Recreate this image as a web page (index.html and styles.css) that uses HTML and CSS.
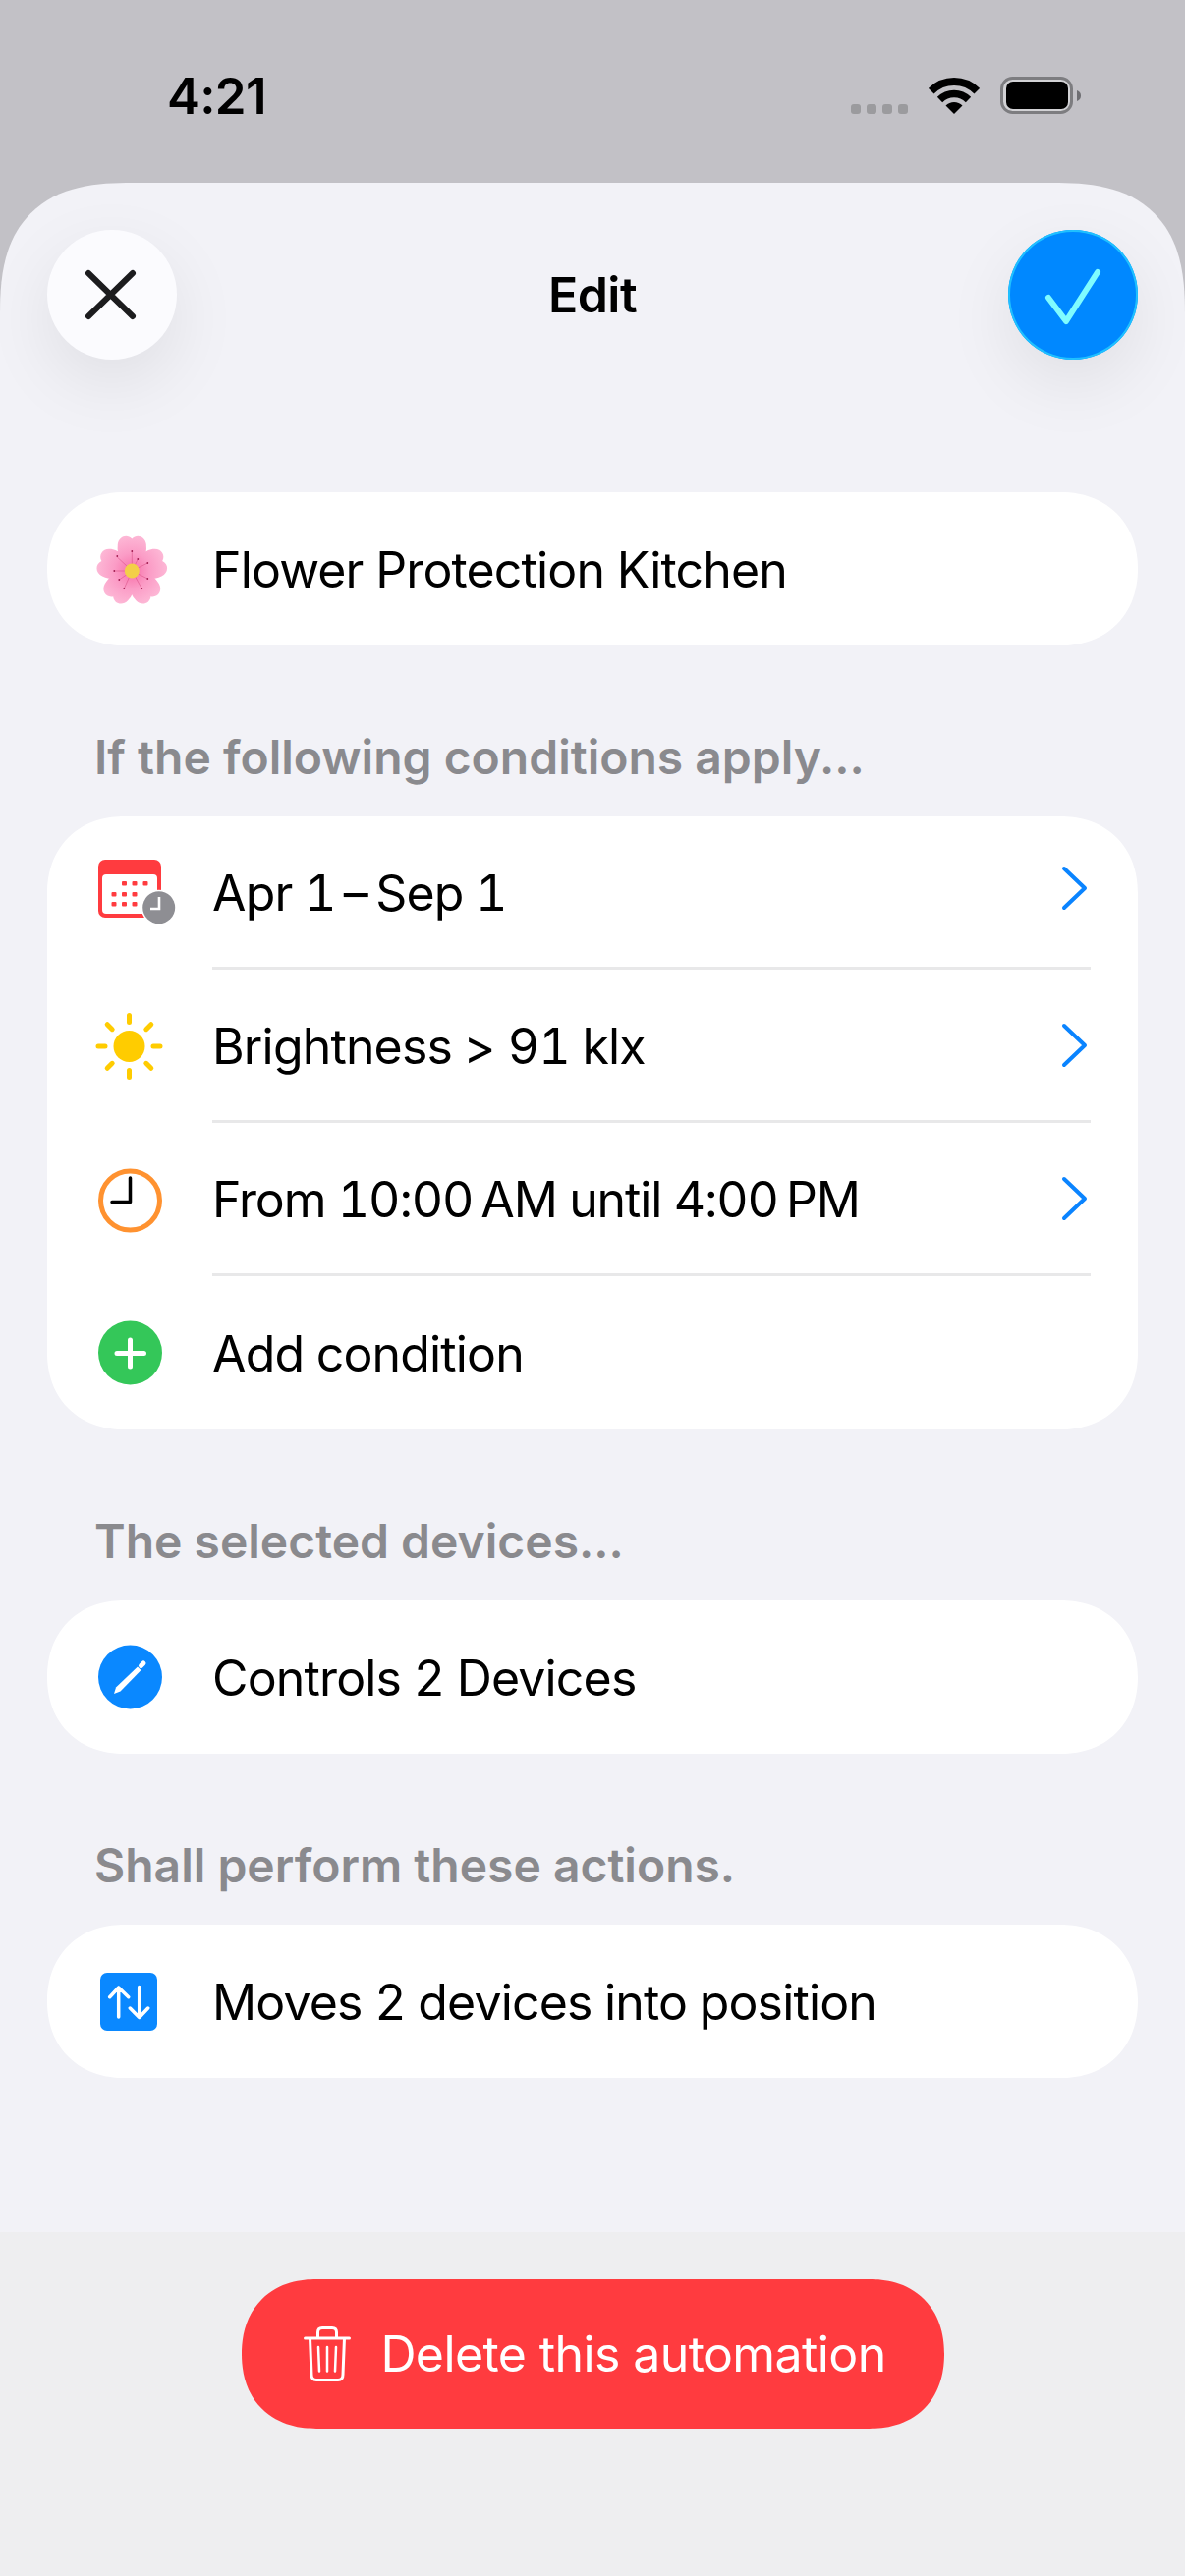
FILE: index.html
```html
<!DOCTYPE html>
<html lang="en">
<head>
    <meta charset="UTF-8">
    <meta name="viewport" content="width=device-width, initial-scale=1.0">
    <title>Edit automation</title>
    <link rel="stylesheet" href="styles.css">
</head>
<body>
    <div class="status-bar">
        <span class="time">4:21</span>
        <div class="status-icons">
            <div class="signal"><span></span><span></span><span></span><span></span></div>
            <svg class="wifi" viewBox="0 0 52 38">
                <path d="M26 38 L17.5 29.5 A12 12 0 0 1 34.5 29.5 Z" fill="#000"/>
                <path d="M11.5 23.5 A20.5 20.5 0 0 1 40.5 23.5" fill="none" stroke="#000" stroke-width="7.5"/>
                <path d="M2.7 14.7 A33 33 0 0 1 49.3 14.7" fill="none" stroke="#000" stroke-width="8"/>
            </svg>
            <svg class="battery" viewBox="0 0 82 38">
                <rect x="1.5" y="1.5" width="71" height="35" rx="11" fill="#d2d2d5" stroke="#7d7d80" stroke-width="3"/>
                <rect x="6" y="5" width="63" height="28" rx="7" fill="#000"/>
                <path d="M78 14 C81 15 82 17 82 19.5 C82 22 81 24 78 25 Z" fill="#6e6e72"/>
            </svg>
        </div>
    </div>

    <div class="sheet">
        <div class="header">
            <button class="round-button close-button">
                <svg viewBox="0 0 132 132">
                    <path d="M42 44 L87 88 M87 44 L42 88" fill="none" stroke="#1c1c1e" stroke-width="6" stroke-linecap="round"/>
                </svg>
            </button>
            <span class="header-title">Edit</span>
            <button class="round-button save-button">
                <svg viewBox="0 0 132 132">
                    <path d="M41 69 L59 93 L91 43" fill="none" stroke="#7ffcff" stroke-width="6" stroke-linecap="round" stroke-linejoin="round"/>
                </svg>
            </button>
        </div>

        <div class="card">
            <div class="row">
                <svg class="icon" viewBox="0 0 66 68">
                    <defs>
                        <radialGradient id="petal" gradientUnits="userSpaceOnUse" cx="0" cy="0" r="36">
                            <stop offset="0" stop-color="#f76fa8"/>
                            <stop offset="0.5" stop-color="#fb9cc6"/>
                            <stop offset="1" stop-color="#fdb8d6"/>
                        </radialGradient>
                    </defs>
                    <g transform="translate(34.3 36)">
                        <g fill="url(#petal)">
                            <path id="flower-petal" d="M0 0 C-9 -5 -16 -14 -14.5 -27 C-13.5 -35 -5 -38 0 -32.500 C5 -38 13.500 -35 14.500 -27 C16 -14 9 -5 0 0 Z"/>
                            <use href="#flower-petal" transform="rotate(72)"/>
                            <use href="#flower-petal" transform="rotate(144)"/>
                            <use href="#flower-petal" transform="rotate(216)"/>
                            <use href="#flower-petal" transform="rotate(288)"/>
                        </g>
                        <g stroke="#d4497f" stroke-width="0.5">
                            <path d="M0 0 L0 -20 M0 0 L-15 -14 M0 0 L-18 0 M0 0 L-13 9 M0 0 L-8 18 M0 0 L10 18 M0 0 L16 8 M0 0 L16 -8 M0 0 L6 -12"/>
                        </g>
                        <g fill="#a01c50">
                            <circle cx="0" cy="-20" r="0.9"/>
                            <circle cx="-15" cy="-15" r="0.9"/>
                            <circle cx="-18" cy="0" r="0.9"/>
                            <circle cx="-13" cy="9" r="0.9"/>
                            <circle cx="-8" cy="18" r="0.9"/>
                            <circle cx="10" cy="18" r="0.9"/>
                            <circle cx="16" cy="8" r="0.9"/>
                            <circle cx="16" cy="-8" r="0.9"/>
                            <circle cx="6" cy="-12" r="0.9"/>
                        </g>
                        <circle r="7.5" fill="#f3cf48"/>
                    </g>
                </svg>
                <div class="row-body"><span class="row-text">Flower Protection Kitchen</span></div>
            </div>
        </div>

        <h2 class="section-title">If the following conditions apply...</h2>
        <div class="card">
            <div class="row row-date">
                <svg class="icon" viewBox="0 0 66 68">
                    <rect width="64" height="59" rx="7" fill="#ff3b3f"/>
                    <rect x="4" y="15" width="56" height="40" rx="4" fill="#fff"/>
                    <g fill="#ff3b3f">
                        <rect x="24" y="22" width="5" height="4.5" rx="1"/>
                        <rect x="34.500" y="22" width="5" height="4.5" rx="1"/>
                        <rect x="45.500" y="22" width="5" height="4.5" rx="1"/>
                        <rect x="13.500" y="33" width="5" height="4.5" rx="1"/>
                        <rect x="24" y="33" width="5" height="4.5" rx="1"/>
                        <rect x="34.500" y="33" width="5" height="4.5" rx="1"/>
                        <rect x="13.500" y="43" width="5" height="4.5" rx="1"/>
                        <rect x="24" y="43" width="5" height="4.5" rx="1"/>
                        <rect x="34.500" y="43" width="5" height="4.5" rx="1"/>
                    </g>
                    <circle cx="61.700" cy="48.700" r="18" fill="#fff"/>
                    <circle cx="61.700" cy="48.700" r="16.500" fill="#8e8e93"/>
                    <path d="M62 38 V50 H53" fill="none" stroke="#fff" stroke-width="2.600"/>
                </svg>
                <div class="row-body">
                    <span class="row-text">Apr 1&#8201;–&#8201;Sep 1</span>
                    <svg class="chevron" viewBox="0 0 28 46"><path d="M3 3 L24 23 L3 43" fill="none" stroke="#0a84ff" stroke-width="4" stroke-linecap="round" stroke-linejoin="round"/></svg>
                </div>
            </div>
            <div class="row">
                <svg class="icon" viewBox="0 0 66 68">
                    <circle cx="31.500" cy="34" r="16" fill="#ffcc00"/>
                    <path d="M31.500 2.500 V9.500 M31.500 58.500 V65.500 M0 34 H7 M56 34 H63 M9.200 11.700 L14.200 16.700 M48.800 51.300 L53.800 56.300 M53.800 11.700 L48.800 16.700 M14.200 51.300 L9.200 56.300" fill="none" stroke="#ffcc00" stroke-width="5" stroke-linecap="round"/>
                </svg>
                <div class="row-body">
                    <span class="row-text">Brightness &gt; 91 klx</span>
                    <svg class="chevron" viewBox="0 0 28 46"><path d="M3 3 L24 23 L3 43" fill="none" stroke="#0a84ff" stroke-width="4" stroke-linecap="round" stroke-linejoin="round"/></svg>
                </div>
            </div>
            <div class="row row-time">
                <svg class="icon" viewBox="0 0 66 68">
                    <circle cx="32.500" cy="35" r="30" fill="none" stroke="#ff9230" stroke-width="5"/>
                    <path d="M32.500 12 V36.500 H14" fill="none" stroke="#000" stroke-width="3.500" stroke-linecap="round" stroke-linejoin="round"/>
                </svg>
                <div class="row-body">
                    <span class="row-text">From 10:00&#8201;AM until 4:00&#8201;PM</span>
                    <svg class="chevron" viewBox="0 0 28 46"><path d="M3 3 L24 23 L3 43" fill="none" stroke="#0a84ff" stroke-width="4" stroke-linecap="round" stroke-linejoin="round"/></svg>
                </div>
            </div>
            <div class="row">
                <svg class="icon" viewBox="0 0 66 68">
                    <circle cx="32.500" cy="34" r="32.500" fill="#34c759"/>
                    <path d="M19 34.500 H46.500 M32.500 21 V48" fill="none" stroke="#fff" stroke-width="5" stroke-linecap="round"/>
                </svg>
                <div class="row-body"><span class="row-text">Add condition</span></div>
            </div>
        </div>

        <h2 class="section-title">The selected devices...</h2>
        <div class="card">
            <div class="row">
                <svg class="icon" viewBox="0 0 66 68">
                    <circle cx="32.500" cy="34" r="32.500" fill="#0a88ff"/>
                    <path d="M16 51 L18 44.500 L40 23.500 L43.500 27 L22.500 48.500 Z" fill="#fff"/>
                    <path d="M43.500 22.500 L46 20" fill="none" stroke="#fff" stroke-width="5" stroke-linecap="round"/>
                </svg>
                <div class="row-body"><span class="row-text">Controls 2 Devices</span></div>
            </div>
        </div>

        <h2 class="section-title">Shall perform these actions.</h2>
        <div class="card">
            <div class="row">
                <svg class="icon" viewBox="0 0 66 68">
                    <rect x="2" y="5" width="58" height="59" rx="7" fill="#0a88ff"/>
                    <path d="M20.700 50 V20 M11.700 29.700 L20.700 20 L30.700 29.700 M41.700 19.600 V50.500 M32.300 41 L41.700 50.500 L50.700 41" fill="none" stroke="#fff" stroke-width="3.500" stroke-linecap="round" stroke-linejoin="round"/>
                </svg>
                <div class="row-body"><span class="row-text">Moves 2 devices into position</span></div>
            </div>
        </div>

        <div class="bottom-bar">
            <button class="delete-button">
                <svg class="trash" viewBox="0 0 48 56">
                    <path d="M1.500 12 H46.500" fill="none" stroke="#fff" stroke-width="3" stroke-linecap="round"/>
                    <path d="M14.500 12 V6 C14.500 3 16 1.500 19 1.500 H29 C32 1.500 33.500 3 33.500 6 V12" fill="none" stroke="#fff" stroke-width="3"/>
                    <path d="M6.500 12 L8 49 C8 52.500 10 54.500 13 54.500 H35 C38 54.500 40 52.500 40 49 L41.500 12" fill="none" stroke="#fff" stroke-width="3"/>
                    <path d="M15 21 L16 45.500 M24 21 V45.500 M33 21 L32 45.500" fill="none" stroke="#fff" stroke-width="2.500" stroke-linecap="round"/>
                </svg>
                <span>Delete this automation</span>
            </button>
        </div>
    </div>
</body>
</html>
```

FILE: styles.css
```css
/* Page */
html, body {
    margin: 0;
    width: 1206px;
    height: 2622px;
    overflow: hidden;
}
body {
    background-color: #c2c1c6;
    font-family: "Inter", "Liberation Sans", sans-serif;
    color: #000;
}

/* Status bar */
.status-bar {
    height: 186px;
    box-sizing: border-box;
    padding: 8px 106px 0 170px;
    display: flex;
    align-items: center;
    justify-content: space-between;
}
.time {
    font-size: 51px;
    font-weight: 600;
    letter-spacing: -0.7px;
}
.status-icons {
    display: flex;
    align-items: flex-end;
    gap: 21px;
}
.signal {
    display: flex;
    gap: 6px;
}
.signal span {
    width: 10px;
    height: 10px;
    border-radius: 3px;
    background-color: #9b9b9e;
}
.wifi {
    width: 52px;
    height: 38px;
}
.battery {
    width: 82px;
    height: 38px;
}

/* Sheet */
.sheet {
    height: 2436px;
    display: flex;
    flex-direction: column;
    overflow: hidden;
    background-color: #f2f2f7;
    border-radius: 135px 135px 0 0;
    corner-shape: superellipse(1.4);
}

/* Header */
.header {
    display: flex;
    align-items: center;
    justify-content: space-between;
    padding: 48px 48px 0;
    margin-bottom: 135px;
}
.header-title {
    font-size: 50px;
    font-weight: 600;
    letter-spacing: -0.5px;
}
.round-button {
    width: 132px;
    height: 132px;
    padding: 0;
    border: none;
    border-radius: 50%;
    box-shadow: 0 24px 70px rgba(0, 0, 0, 0.08);
}
.round-button svg {
    display: block;
    width: 132px;
    height: 132px;
}
.close-button {
    background-color: #fbfbfe;
}
.save-button {
    background-color: #0088ff;
    box-shadow: 0 24px 70px rgba(0, 0, 0, 0.08), inset 0 0 0 2px #1fc1ff;
}

/* Cards and rows */
.card {
    margin: 0 48px;
    background-color: #fff;
    border-radius: 78px;
    corner-shape: superellipse(1.1);
}
.row {
    height: 156px;
    padding: 0 48px 0 52px;
    display: flex;
    align-items: center;
}
.icon {
    flex: none;
    width: 66px;
    height: 68px;
    margin-right: 50px;
    overflow: visible;
}
.row-body {
    flex: 1;
    height: 100%;
    box-sizing: border-box;
    padding-right: 2px;
    display: flex;
    align-items: center;
    justify-content: space-between;
    border-bottom: 3px solid #e8e8e9;
}
.row:last-child .row-body {
    border-bottom: none;
}
.row-text {
    padding-top: 2px;
    font-size: 50px;
    font-variant-numeric: tabular-nums;
    letter-spacing: -0.85px;
    white-space: pre;
}
.row-time .row-text {
    letter-spacing: -1.1px;
}
.chevron {
    width: 28px;
    height: 46px;
}
.row-date .chevron {
    margin-bottom: 8px;
}

/* Section titles */
.section-title {
    margin: 0;
    padding: 84px 96px 30px;
    font-size: 48px;
    line-height: 60px;
    font-weight: 600;
    color: #8a8a8e;
}

/* Delete button */
.bottom-bar {
    margin-top: auto;
    height: 350px;
    box-sizing: border-box;
    padding-top: 48px;
    background-color: #eeeef0;
}
.delete-button {
    display: flex;
    align-items: center;
    justify-content: center;
    gap: 30px;
    width: 715px;
    height: 152px;
    margin: 0 auto;
    padding: 0 0 0 5px;
    border: none;
    border-radius: 76px;
    corner-shape: superellipse(1.15);
    background-color: #ff3b3f;
    color: #fff;
    font-family: inherit;
    font-size: 50px;
    letter-spacing: -0.6px;
}
.trash {
    width: 48px;
    height: 56px;
}
```
